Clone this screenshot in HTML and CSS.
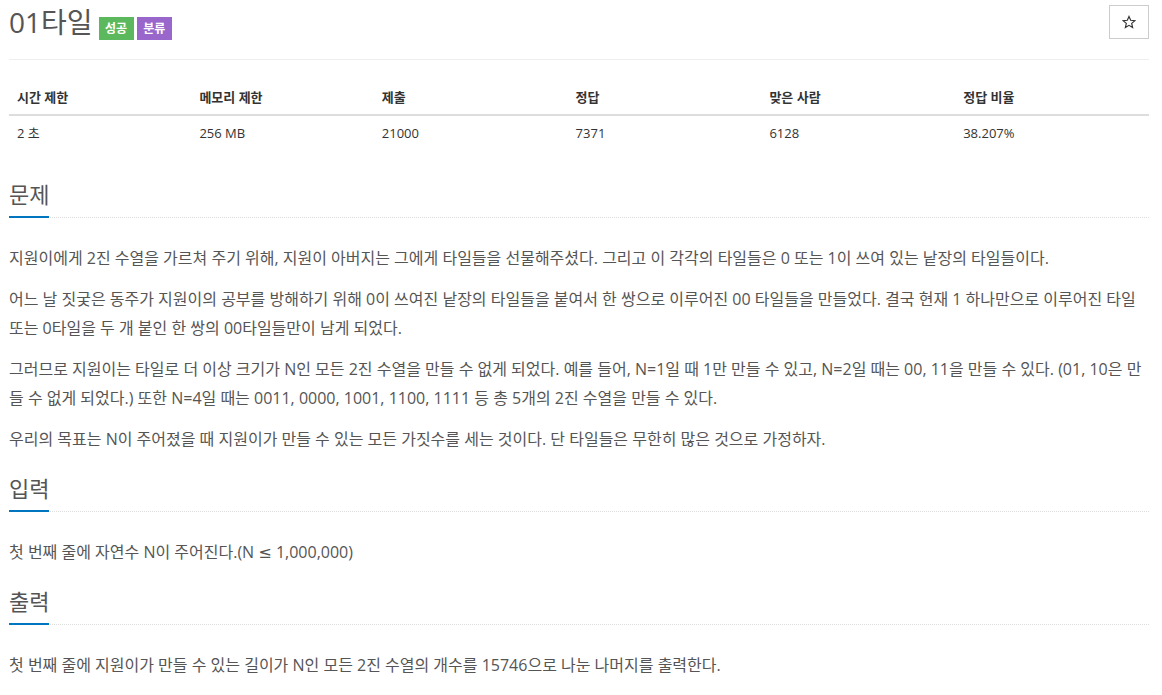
FILE: index.html
```html
<!DOCTYPE html>
<html lang="ko">
<head>
<meta charset="utf-8">
<title>01타일</title>
<link rel="stylesheet" href="styles.css">
</head>
<body>
<div class="page">
  <div class="page-header">
    <div class="title-row">
      <h1 class="title">01타일</h1>
      <span class="badge badge-success">성공</span>
      <span class="badge badge-purple">분류</span>
    </div>
    <button class="star-btn" type="button" aria-label="즐겨찾기">
      <svg width="14" height="14" viewBox="0 0 24 24" aria-hidden="true"><path d="M12 2.5l2.9 6.6 7.1.6-5.4 4.7 1.6 7-6.2-3.7-6.2 3.7 1.6-7L2 9.7l7.1-.6z" fill="none" stroke="#333" stroke-width="2" stroke-linejoin="miter"/></svg>
    </button>
  </div>

  <table class="info-table">
    <thead>
      <tr>
        <th class="w16">시간 제한</th>
        <th class="w16">메모리 제한</th>
        <th class="w17">제출</th>
        <th class="w17">정답</th>
        <th class="w17">맞은 사람</th>
        <th class="w17">정답 비율</th>
      </tr>
    </thead>
    <tbody>
      <tr>
        <td>2 초</td>
        <td>256 MB</td>
        <td>21000</td>
        <td>7371</td>
        <td>6128</td>
        <td>38.207%</td>
      </tr>
    </tbody>
  </table>

  <section class="section">
    <div class="headline"><h2>문제</h2></div>
    <div class="problem-text">
      <p>지원이에게 2진 수열을 가르쳐 주기 위해, 지원이 아버지는 그에게 타일들을 선물해주셨다. 그리고 이 각각의 타일들은 0 또는 1이 쓰여 있는 낱장의 타일들이다.</p>
      <p>어느 날 짓궂은 동주가 지원이의 공부를 방해하기 위해 0이 쓰여진 낱장의 타일들을 붙여서 한 쌍으로 이루어진 00 타일들을 만들었다. 결국 현재 1 하나만으로 이루어진 타일 또는 0타일을 두 개 붙인 한 쌍의 00타일들만이 남게 되었다.</p>
      <p>그러므로 지원이는 타일로 더 이상 크기가 N인 모든 2진 수열을 만들 수 없게 되었다. 예를 들어, N=1일 때 1만 만들 수 있고, N=2일 때는 00, 11을 만들 수 있다. (01, 10은 만들 수 없게 되었다.) 또한 N=4일 때는 0011, 0000, 1001, 1100, 1111 등 총 5개의 2진 수열을 만들 수 있다.</p>
      <p>우리의 목표는 N이 주어졌을 때 지원이가 만들 수 있는 모든 가짓수를 세는 것이다. 단 타일들은 무한히 많은 것으로 가정하자.</p>
    </div>
  </section>

  <section class="section">
    <div class="headline"><h2>입력</h2></div>
    <div class="problem-text">
      <p>첫 번째 줄에 자연수 N이 주어진다.(N <span class="math">≤</span> 1,000,000)</p>
    </div>
  </section>

  <section class="section">
    <div class="headline"><h2>출력</h2></div>
    <div class="problem-text">
      <p>첫 번째 줄에 지원이가 만들 수 있는 길이가 N인 모든 2진 수열의 개수를 15746으로 나눈 나머지를 출력한다.</p>
    </div>
  </section>
</div>
</body>
</html>
```

FILE: styles.css
```css
html, body {
  margin: 0;
  padding: 0;
  background: #fff;
}

body {
  font-family: "Open Sans", "Noto Sans CJK KR", sans-serif;
  color: #333;
  font-size: 14px;
}

.page {
  width: 1140px;
  margin-left: 9px;
}

.page-header {
  display: flex;
  justify-content: space-between;
  align-items: flex-start;
  height: 59px;
  border-bottom: 1px solid #eee;
  box-sizing: content-box;
}

.title-row {
  display: flex;
  align-items: baseline;
  padding-top: 6px;
}

.title {
  margin: 0 6px 0 0;
  font-size: 28px;
  line-height: 32px;
  font-weight: 400;
  color: #555;
}

.badge {
  display: inline-block;
  font-size: 12px;
  line-height: 15px;
  font-weight: 700;
  color: #fff;
  padding: 4px 6.5px;
  margin-right: 3px;
}

.badge-success {
  background: #5cb85c;
}

.badge-purple {
  background: #9966cc;
}

.star-btn {
  margin-top: 5px;
  width: 40px;
  height: 34px;
  background: #fff;
  border: 1px solid #ccc;
  display: flex;
  align-items: center;
  justify-content: center;
  padding: 0;
}

.info-table {
  width: 100%;
  border-collapse: collapse;
  margin-top: 20px;
  margin-bottom: 32px;
  font-size: 13px;
  line-height: 18px;
}

.info-table th {
  text-align: left;
  font-weight: 700;
  padding: 8px;
  border-bottom: 2px solid #ddd;
  color: #333;
}

.info-table td {
  padding: 8px;
  color: #333;
}

.w16 { width: 16%; }
.w17 { width: 17%; }

.section {
  margin-bottom: 22px;
}

.headline {
  border-bottom: 1px dotted #ddd;
  margin-bottom: 26px;
}

.headline h2 {
  display: inline-block;
  margin: 0 0 -1px 0;
  padding-bottom: 10px;
  font-size: 22px;
  line-height: 24px;
  font-weight: 400;
  color: #555;
  border-bottom: 2px solid #0076c0;
}

.problem-text {
  font-size: 16px;
  line-height: 29px;
  color: #555;
}

.problem-text p {
  margin: 0 0 12px 0;
}

.math {
  font-family: "DejaVu Sans", sans-serif;
}
```
